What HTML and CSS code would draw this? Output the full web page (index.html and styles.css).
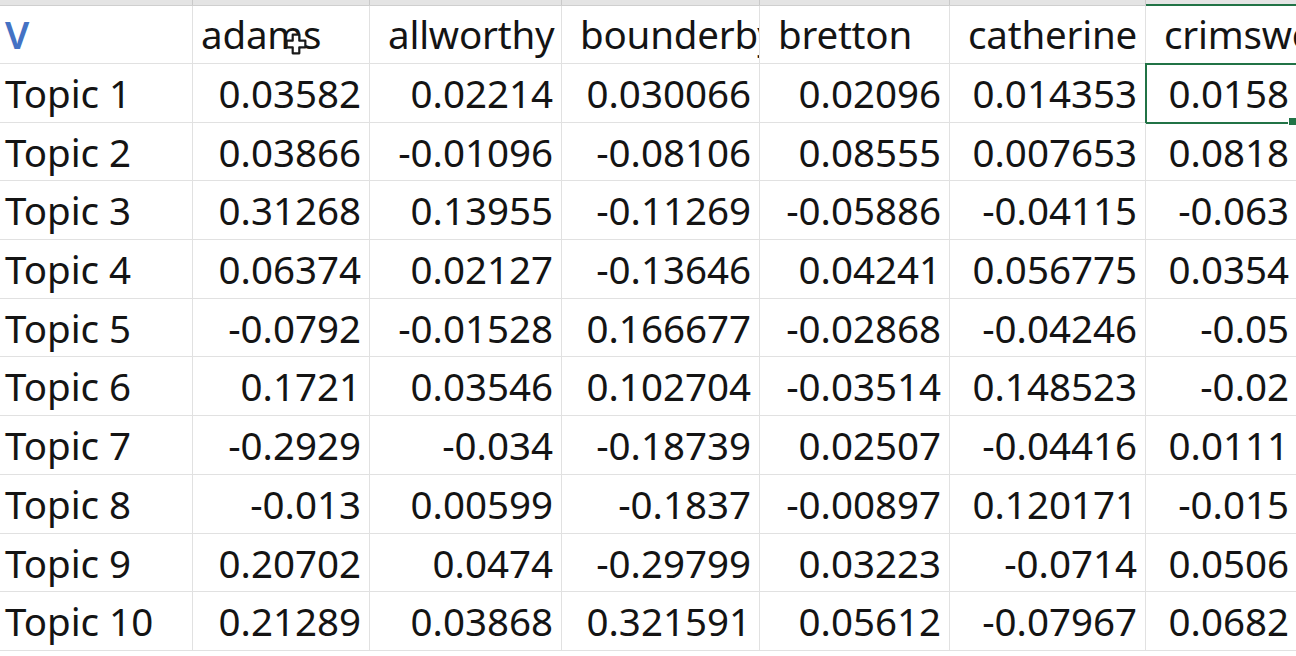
FILE: index.html
```html
<!DOCTYPE html>
<html lang="en">
<head>
    <meta charset="UTF-8">
    <title>Topics sheet</title>
    <link rel="stylesheet" href="styles.css">
</head>
<body>

    <!-- column header strip (cut off at the top) -->
    <div class="col-strip">
        <div></div><div></div><div></div><div></div><div></div><div></div>
        <div class="active"></div>
    </div>

    <!-- cells -->
    <div class="sheet">
        <div class="cell label v">V</div>
        <div class="cell head">adams</div>
        <div class="cell head lead">allworthy</div>
        <div class="cell head lead">bounderby</div>
        <div class="cell head lead">bretton</div>
        <div class="cell head lead">catherine</div>
        <div class="cell head lead">crimsworth</div>

        <div class="cell label">Topic 1</div>
        <div class="cell">0.03582</div>
        <div class="cell">0.02214</div>
        <div class="cell">0.030066</div>
        <div class="cell">0.02096</div>
        <div class="cell">0.014353</div>
        <div class="cell selected">0.0158</div>

        <div class="cell label">Topic 2</div>
        <div class="cell">0.03866</div>
        <div class="cell">-0.01096</div>
        <div class="cell">-0.08106</div>
        <div class="cell">0.08555</div>
        <div class="cell">0.007653</div>
        <div class="cell">0.0818</div>

        <div class="cell label">Topic 3</div>
        <div class="cell">0.31268</div>
        <div class="cell">0.13955</div>
        <div class="cell">-0.11269</div>
        <div class="cell">-0.05886</div>
        <div class="cell">-0.04115</div>
        <div class="cell">-0.063</div>

        <div class="cell label">Topic 4</div>
        <div class="cell">0.06374</div>
        <div class="cell">0.02127</div>
        <div class="cell">-0.13646</div>
        <div class="cell">0.04241</div>
        <div class="cell">0.056775</div>
        <div class="cell">0.0354</div>

        <div class="cell label">Topic 5</div>
        <div class="cell">-0.0792</div>
        <div class="cell">-0.01528</div>
        <div class="cell">0.166677</div>
        <div class="cell">-0.02868</div>
        <div class="cell">-0.04246</div>
        <div class="cell">-0.05</div>

        <div class="cell label">Topic 6</div>
        <div class="cell">0.1721</div>
        <div class="cell">0.03546</div>
        <div class="cell">0.102704</div>
        <div class="cell">-0.03514</div>
        <div class="cell">0.148523</div>
        <div class="cell">-0.02</div>

        <div class="cell label">Topic 7</div>
        <div class="cell">-0.2929</div>
        <div class="cell">-0.034</div>
        <div class="cell">-0.18739</div>
        <div class="cell">0.02507</div>
        <div class="cell">-0.04416</div>
        <div class="cell">0.0111</div>

        <div class="cell label">Topic 8</div>
        <div class="cell">-0.013</div>
        <div class="cell">0.00599</div>
        <div class="cell">-0.1837</div>
        <div class="cell">-0.00897</div>
        <div class="cell">0.120171</div>
        <div class="cell">-0.015</div>

        <div class="cell label">Topic 9</div>
        <div class="cell">0.20702</div>
        <div class="cell">0.0474</div>
        <div class="cell">-0.29799</div>
        <div class="cell">0.03223</div>
        <div class="cell">-0.0714</div>
        <div class="cell">0.0506</div>

        <div class="cell label">Topic 10</div>
        <div class="cell">0.21289</div>
        <div class="cell">0.03868</div>
        <div class="cell">0.321591</div>
        <div class="cell">0.05612</div>
        <div class="cell">-0.07967</div>
        <div class="cell">0.0682</div>
    </div>

    <!-- mouse pointer over the header -->
    <svg class="pointer" width="22" height="22" viewBox="0 0 20 20">
        <path d="M7 1.5h6v5.5h5.5v6h-5.5v5.5h-6v-5.5h-5.5v-6h5.5z" fill="#fff" stroke="#1a1a1a" stroke-width="2" stroke-linejoin="round"/>
    </svg>

</body>
</html>
```

FILE: styles.css
```css
html, body {
    margin: 0;
    padding: 0;
    overflow: hidden;
    background: #fff;
}

body {
    position: relative;
    width: 1296px;
    height: 656px;
    font-family: "Noto Sans", "Open Sans", sans-serif;
    color: #141414;
}

.col-strip {
    display: grid;
    grid-template-columns: 193px 177px 192px 198px 190px 196px 152px;
    height: 5px;
    background: #e4e4e4;
    border-bottom: 1px solid #cfcfcf;
}

.col-strip div {
    border-right: 1px solid #c9c9c9;
}

.col-strip .active {
    border-bottom: 2px solid #217346;
    margin-bottom: -1px;
}

.sheet {
    display: grid;
    grid-template-columns: 193px 177px 192px 198px 190px 196px 152px;
    grid-template-rows: 58px;
    grid-auto-rows: 58.7px;
}

.cell {
    position: relative;
    box-sizing: border-box;
    border-right: 1px solid #e1e1e1;
    border-bottom: 1px solid #e1e1e1;
    padding: 2px 8px 0 0;
    font-size: 38.5px;
    line-height: 55px;
    text-align: right;
    white-space: nowrap;
    overflow: hidden;
}

.head {
    text-align: left;
    padding: 0 0 0 8px;
    line-height: 57px;
    letter-spacing: -0.2px;
}

.head.lead {
    padding-left: 18px;
}

.label {
    text-align: left;
    padding-left: 5px;
}

.v {
    color: #4472c4;
    font-weight: 600;
    padding-top: 0;
    line-height: 57px;
}

.selected {
    overflow: visible;
    outline: 2px solid #217346;
    outline-offset: -1px;
}

.selected::after {
    content: "";
    position: absolute;
    right: 0;
    bottom: -4px;
    width: 7px;
    height: 7px;
    background: #217346;
    border: 1px solid #fff;
}

.pointer {
    position: absolute;
    left: 285px;
    top: 33px;
}
```
